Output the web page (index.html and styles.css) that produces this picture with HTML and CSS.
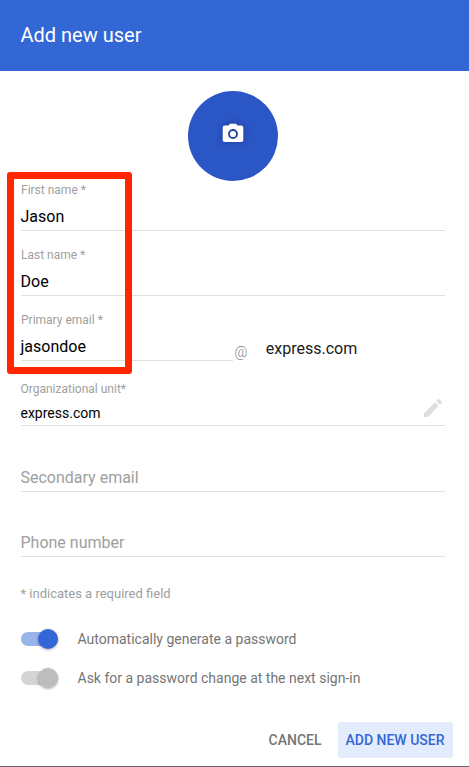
FILE: index.html
```html
<!DOCTYPE html>
<html lang="en">
<head>
<meta charset="utf-8">
<title>Add new user</title>
<link rel="stylesheet" href="styles.css">
</head>
<body>
<main class="dialog">
  <header class="header"><h1>Add new user</h1></header>
  <div class="avatar">
    <svg width="24" height="24" viewBox="0 0 24 24" fill="#fff"><path d="M9 2.700 7.500 4.500H3.700c-1.100 0-2 .9-2 2v12.500c0 1.100.9 2 2 2h16.600c1.100 0 2-.9 2-2V6.500c0-1.100-.9-2-2-2h-3.800L15 2.700zm3 15.200c-2.700 0-4.900-2.200-4.900-4.900s2.200-4.900 4.900-4.900 4.900 2.200 4.900 4.900-2.200 4.900-4.900 4.900z"/><circle cx="12" cy="13" r="3.100"/></svg>
  </div>
  <form class="form">
    <section class="required">
      <div class="field"><label>First name *</label><span>Jason</span></div>
      <div class="field"><label>Last name *</label><span>Doe</span></div>
      <div class="email-row">
        <div class="field email"><label>Primary email *</label><span>jasondoe</span></div>
        <span class="at">@</span><span class="domain">express.com</span>
      </div>
      <div class="highlight"></div>
    </section>
    <div class="unit">
      <div><label>Organizational unit*</label><span>express.com</span></div>
      <svg width="24" height="24" viewBox="0 0 24 24" fill="#dedede"><path d="M3 17.250V21h3.750L17.810 9.940l-3.750-3.750zM20.710 7.040a1 1 0 0 0 0-1.410l-2.340-2.340a1 1 0 0 0-1.410 0l-1.830 1.830 3.750 3.750z"/></svg>
    </div>
    <div class="empty">Secondary email</div>
    <div class="empty">Phone number</div>
    <p class="note">* indicates a required field</p>
    <div class="option"><i class="switch on"></i><span>Automatically generate a password</span></div>
    <div class="option"><i class="switch"></i><span>Ask for a password change at the next sign-in</span></div>
  </form>
  <footer class="actions"><button class="cancel">CANCEL</button><button class="add">ADD NEW USER</button></footer>
</main>
</body>
</html>
```
FILE: styles.css
```css
* { box-sizing: border-box; }
body { margin: 0; font-family: Roboto, sans-serif; background: #fff; }
.dialog { height: 767px; display: flex; flex-direction: column; border-bottom: 1px solid #666; overflow: hidden; }
.header { height: 71px; flex: none; padding: 0 20.500px 2px; background: #3367d6; color: #fff; display: flex; align-items: center; }
h1 { margin: 0; font-size: 20px; font-weight: 400; line-height: 24px; }
.avatar { width: 90px; height: 90px; flex: none; margin: 20px 0 0 188px; border-radius: 50%; background: #2a56c6; display: flex; align-items: center; justify-content: center; padding: 0 1px 6px 0; }
.avatar svg { filter: drop-shadow(0 0 3px rgba(0, 0, 0, .3)); }
.form { padding: 0 24px 0 21px; }
.required { position: relative; }
.field { height: 50px; margin-bottom: 15px; border-bottom: 1px solid #e0e0e0; }
.field label, .unit label { display: block; font-size: 12px; line-height: 16px; color: #a0a0a0; }
.field label { padding-top: 1px; }
.field span { display: block; margin: 8px 0 0 -.5px; font-size: 16px; line-height: 22px; color: #000; }
.email-row { display: flex; height: 50px; }
.email { width: 212px; margin-bottom: 0; }
.at { margin: 32px 0 0 1.500px; font: 300 14px/18px Roboto, sans-serif; color: #808080; }
.domain { margin: 27px 0 0 18.500px; font-size: 16px; line-height: 22px; color: #212121; }
.highlight { position: absolute; left: -14px; top: -9px; width: 125px; height: 202px; border: 7px solid #ff2600; border-radius: 3px; }
.unit { height: 45px; margin-top: 20px; border-bottom: 1px solid #e0e0e0; display: flex; justify-content: space-between; }
.unit label { margin-left: -.5px; }
.unit span { display: block; margin: 7px 0 0 -.5px; font-size: 14px; line-height: 18px; color: #000; }
.unit svg { margin-top: 15px; }
.empty { height: 66px; border-bottom: 1px solid #e0e0e0; padding-top: 41px; font-size: 16px; line-height: 22px; color: #9e9e9e; text-indent: -.5px; }
.empty + .empty { height: 65px; padding-top: 40px; }
.note { margin: 28px 0 26px; font-size: 13px; line-height: 18px; color: #9e9e9e; text-indent: -.5px; }
.option { height: 39px; display: flex; align-items: flex-start; font-size: 14px; line-height: 20px; color: #757575; }
.switch { position: relative; width: 37px; height: 14px; margin: 3px 19.500px 0 0; border-radius: 7px; background: #d5d5d5; }
.switch::after { content: ""; position: absolute; right: 0; top: -3px; width: 20px; height: 20px; border-radius: 50%; background: #bdbdbd; box-shadow: 0 1px 3px rgba(0, 0, 0, .3); }
.switch.on { background: #99b3eb; }
.switch.on::after { background: #3367d6; }
.actions { margin-top: auto; margin-bottom: 8px; padding-right: 16px; display: flex; justify-content: flex-end; }
button { height: 36px; padding: 0; border: 0; border-radius: 3px; background: none; font: 500 14px Roboto, sans-serif; }
.cancel { margin-right: 16.500px; color: #757575; }
.add { width: 115px; padding-right: 1px; background: #e3ecfd; color: #3367d6; }
```
